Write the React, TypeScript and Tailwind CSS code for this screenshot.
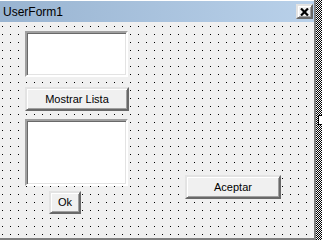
const raised =
  "border-2 border-t-[#e3e3e3] border-l-[#e3e3e3] border-b-[#696969] border-r-[#696969] shadow-[inset_1px_1px_0_#fff,inset_-1px_-1px_0_#a0a0a0] bg-[#f0f0f0] flex items-center justify-center";
const sunken =
  "border-2 border-t-[#a0a0a0] border-l-[#a0a0a0] border-b-white border-r-white shadow-[inset_1px_1px_0_#696969,inset_-1px_-1px_0_#e3e3e3] bg-white";

const GridDots = () => (
  <svg className="absolute inset-0 w-full h-full" shapeRendering="crispEdges">
    <defs>
      <pattern id="dots" x="2" y="4" width="8" height="8" patternUnits="userSpaceOnUse">
        <rect width="1" height="1" fill="#000" />
      </pattern>
    </defs>
    <rect width="100%" height="100%" fill="url(#dots)" />
  </svg>
);

const App = () => (
  <div className="w-[322px] h-[240px] flex bg-white overflow-hidden text-[11px] text-black font-['Liberation_Sans',Arial,sans-serif]">
    <div className="w-[316px] h-[240px] flex flex-col border-r-2 border-[#808080]">
      <div className="h-px bg-white" />
      <div className="h-[21px] flex items-center justify-between pl-[3px] pr-px bg-gradient-to-r from-[#99b4d1] to-[#b9d1ea]">
        <span className="text-[12px] leading-none">UserForm1</span>
        <div className={`w-[17px] h-[15px] ${raised}`}>
          <svg width="9" height="8" viewBox="0 0 9 8">
            <path d="M1 0.5L8 7.5M8 0.5L1 7.5" stroke="#000" strokeWidth="2.2" />
          </svg>
        </div>
      </div>
      <div className="relative flex-1 bg-[#f0f0f0] border-b-2 border-[#808080]">
        <GridDots />
        <div className="relative flex pt-[9px] pl-[25px]">
          <div className="flex flex-col">
            <div className={`w-[103px] h-[46px] ${sunken}`} />
            <button className={`mt-[10px] w-[104px] h-[24px] ${raised}`}>Mostrar Lista</button>
            <div className={`mt-[8px] w-[103px] h-[67px] ${sunken}`} />
            <button className={`mt-[5px] ml-[24px] w-[32px] h-[23px] ${raised}`}>Ok</button>
          </div>
          <div>
            <button className={`mt-[144px] ml-[56px] w-[96px] h-[24px] ${raised}`}>Aceptar</button>
          </div>
        </div>
      </div>
    </div>
    <div className="w-[6px] h-[240px] bg-[image:repeating-conic-gradient(#000_0_25%,#fff_0_50%)] bg-[length:2px_2px]">
      <div className="mt-[115px] ml-[2px] w-[6px] h-[10px] border border-black bg-white" />
    </div>
  </div>
);

export default App;
